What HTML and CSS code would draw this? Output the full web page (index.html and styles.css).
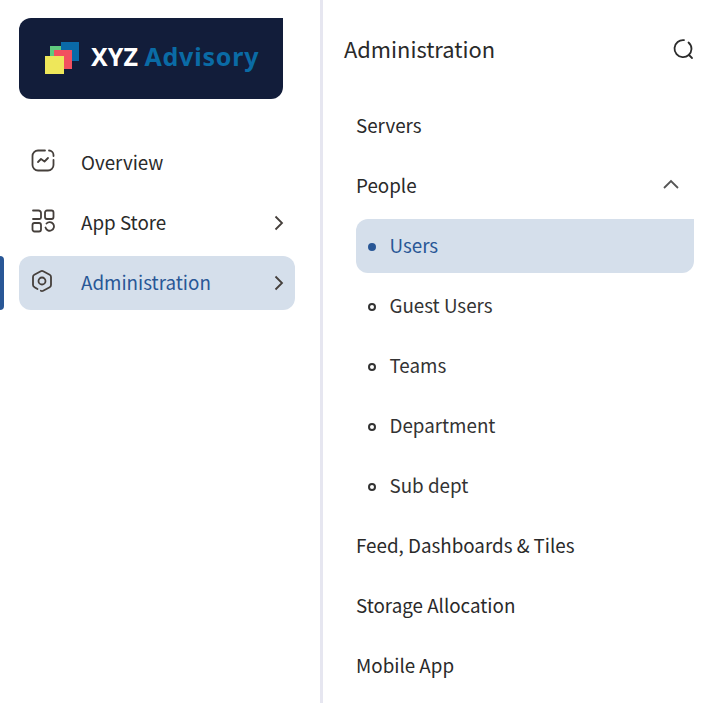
FILE: index.html
```html
<!DOCTYPE html>
<html lang="en">
<head>
    <meta charset="UTF-8">
    <meta name="viewport" content="width=device-width, initial-scale=1.0">
    <title>XYZ Advisory</title>
    <link rel="stylesheet" href="styles.css">
</head>
<body>

<div class="layout">
    <aside class="sidebar">
        <div class="logo">
            <svg class="logo-mark" width="34" height="32" viewBox="0 0 34 32">
                <rect x="5" y="4" width="18" height="18" fill="#5fc97e"/>
                <rect x="16" y="0" width="18" height="19" fill="#0a6aa8"/>
                <rect x="9" y="8" width="18" height="19" fill="#f2505f"/>
                <rect x="0" y="14" width="19" height="18" fill="#eee75a"/>
            </svg>
            <span class="logo-text">XYZ <span class="logo-accent">Advisory</span></span>
        </div>
        <nav class="main-nav">
            <div class="nav-item">
                <svg class="nav-icon" width="24" height="24" viewBox="0 0 24 24" fill="none" stroke="#453f3b" stroke-width="1.800" stroke-linecap="round" stroke-linejoin="round">
                    <path d="M14 1.500H7A5.500 5.500 0 0 0 1.500 7v9A5.500 5.500 0 0 0 7 21.500h10a5.500 5.500 0 0 0 5.500-5.500v-5"/>
                    <path d="M18 1.500a4.500 4.500 0 0 1 4.500 4.500v1"/>
                    <path d="M7 13l3-3 3.500 2.500L17 9"/>
                </svg>
                <span class="nav-label">Overview</span>
            </div>
            <div class="nav-item">
                <svg class="nav-icon" width="24" height="24" viewBox="0 0 24 24" fill="none" stroke="#453f3b" stroke-width="1.800" stroke-linecap="round" stroke-linejoin="round">
                    <path d="M2 10h6.500a1.500 1.500 0 0 0 1.500-1.500V4a2.500 2.500 0 0 0-2.500-2.500H2"/>
                    <rect x="14" y="1.500" width="8.500" height="8.500" rx="2"/>
                    <rect x="1.500" y="14" width="8.500" height="8.500" rx="2"/>
                    <path d="M15.500 14.500a4.300 4.300 0 1 1-1 4"/>
                </svg>
                <span class="nav-label">App Store</span>
                <svg class="chevron" width="12" height="16" viewBox="0 0 12 16" fill="none" stroke="#453f3b" stroke-width="1.800"><path d="M2.500 1.500 9 8l-6.500 6.500"/></svg>
            </div>
            <div class="nav-item active">
                <span class="active-bar"></span>
                <svg class="nav-icon nav-icon-admin" width="24" height="24" viewBox="0 0 24 24" fill="none" stroke="#453f3b" stroke-width="1.800" stroke-linecap="round" stroke-linejoin="round">
                    <path d="M7.500 20l-3-1.800A2.500 2.500 0 0 1 3 16V8a2.500 2.500 0 0 1 1.300-2.200l6.500-3.600a2.500 2.500 0 0 1 2.400 0l6.500 3.600A2.500 2.500 0 0 1 21 8v8a2.500 2.500 0 0 1-1.300 2.200l-6.500 3.600a2.500 2.500 0 0 1-2.400 0"/>
                    <circle cx="12" cy="12" r="3.500"/>
                </svg>
                <span class="nav-label">Administration</span>
                <svg class="chevron" width="12" height="16" viewBox="0 0 12 16" fill="none" stroke="#453f3b" stroke-width="1.800"><path d="M2.500 1.500 9 8l-6.500 6.500"/></svg>
            </div>
        </nav>
    </aside>

    <main class="panel">
        <div class="panel-head">
            <h2 class="panel-title">Administration</h2>
            <svg class="search-icon" width="22" height="22" viewBox="0 0 22 22" fill="none" stroke="#2b2b2b" stroke-width="1.800" stroke-linecap="round">
                <path d="M12 2.200A8.500 8.500 0 1 0 19.500 11 8.500 8.500 0 0 0 16.500 4.500"/>
                <path d="M17 17l3 3"/>
            </svg>
        </div>
        <ul class="menu">
            <li class="menu-row">Servers</li>
            <li class="menu-row">People
                <svg width="18" height="12" viewBox="0 0 18 12" fill="none" stroke="#555" stroke-width="1.800"><path d="M2 10l7-7 7 7"/></svg>
            </li>
            <li class="menu-row sub current"><span class="dot"></span>Users</li>
            <li class="menu-row sub"><span class="dot"></span>Guest Users</li>
            <li class="menu-row sub"><span class="dot"></span>Teams</li>
            <li class="menu-row sub"><span class="dot"></span>Department</li>
            <li class="menu-row sub"><span class="dot"></span>Sub dept</li>
            <li class="menu-row">Feed, Dashboards &amp; Tiles</li>
            <li class="menu-row">Storage Allocation</li>
            <li class="menu-row">Mobile App</li>
        </ul>
    </main>
</div>

</body>
</html>
```

FILE: styles.css
```css
* {
    box-sizing: border-box;
}
html, body {
    height: 100%;
}
body {
    margin: 0;
    background-color: white;
    color: #2a2a2a;
    font-family: "Noto Sans CJK SC", "Noto Sans", sans-serif;
    font-size: 18.8px;
    overflow: hidden;
}
.layout {
    display: flex;
    height: 703px;
}
.sidebar {
    width: 320px;
    padding: 18px 25px 0 19px;
}
.logo {
    display: flex;
    align-items: center;
    width: 264px;
    height: 81px;
    padding-left: 26px;
    background-color: #121d3a;
    border-radius: 12px 0 12px 12px;
}
.logo-mark {
    flex: none;
    margin-top: -1px;
}
.logo-text {
    margin: -6px 0 0 12px;
    color: white;
    font-family: "Noto Sans", sans-serif;
    font-size: 25px;
    font-weight: 700;
}
.logo-accent {
    color: #0a6ba5;
    letter-spacing: 0.8px;
}
.main-nav {
    display: flex;
    flex-direction: column;
    gap: 6px;
    margin-top: 37px;
}
.nav-item {
    position: relative;
    display: flex;
    align-items: center;
    height: 54px;
    padding: 0 10px 0 12px;
    border-radius: 12px;
}
.nav-icon {
    flex: none;
    margin-top: -4px;
}
.nav-icon-admin {
    margin-left: -1px;
    margin-right: 1px;
}
.nav-label {
    flex: 1;
    margin: -4px 0 0 26px;
}
.chevron {
    flex: none;
}
.nav-item.active {
    background-color: #d5dfeb;
    color: #295796;
}
.active-bar {
    position: absolute;
    left: -19px;
    top: 0;
    width: 4px;
    height: 54px;
    background-color: #295796;
    border-radius: 0 4px 4px 0;
}
.panel {
    flex: 1;
    padding: 18px 18px 0 21px;
    border-left: 3px solid #e6e6f0;
}
.panel-head {
    display: flex;
    align-items: center;
    justify-content: space-between;
    height: 64px;
    margin-bottom: 17px;
}
.panel-title {
    margin: -4px 0 0;
    font-size: 21.85px;
    font-weight: 400;
}
.search-icon {
    margin-top: -2px;
}
.menu {
    list-style: none;
    margin: 0 0 0 12px;
    padding: 0;
    display: flex;
    flex-direction: column;
    gap: 6px;
}
.menu-row {
    display: flex;
    align-items: center;
    justify-content: space-between;
    height: 54px;
    padding: 0 14px 4px 0;
    border-radius: 12px;
}
.menu-row.sub {
    justify-content: flex-start;
    padding-left: 12px;
    color: #333;
}
.dot {
    width: 8px;
    height: 8px;
    margin: 6px 13.5px 0 0;
    border: 2px solid #333;
    border-radius: 50%;
}
.menu-row.current {
    background-color: #d5dfeb;
    color: #295796;
    border-radius: 12px 0 12px 12px;
}
.current .dot {
    background-color: #295796;
    border-color: #295796;
}
```
